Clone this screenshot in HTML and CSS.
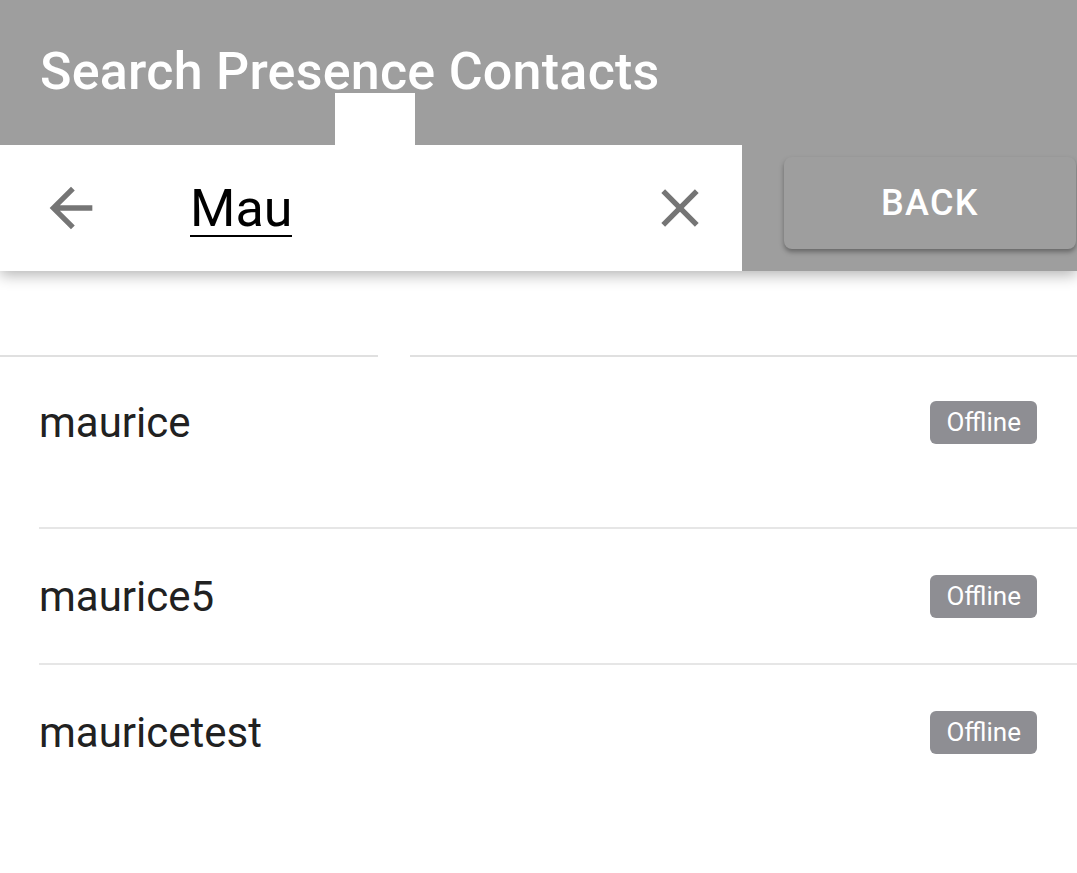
FILE: index.html
```html
<!DOCTYPE html>
<html>
<head>
<meta charset="utf-8">
<link rel="stylesheet" href="styles.css">
</head>
<body>
<header class="header">
  <div class="title-row">
    <h1 class="title">Search Presence Contacts</h1>
    <div class="notch"></div>
  </div>
  <div class="search-row">
    <div class="searchbar">
      <svg class="icon icon-back" viewBox="0 0 24 24"><path d="M20 11H7.83l5.59-5.59L12 4l-8 8 8 8 1.41-1.41L7.83 13H20v-2z"/></svg>
      <div class="query-wrap"><span class="query">Mau</span></div>
      <svg class="icon icon-close" viewBox="0 0 24 24"><path d="M19 6.410L17.590 5 12 10.59 6.41 5 5 6.41 10.59 12 5 17.59 6.41 19 12 13.41 17.59 19 19 17.59 13.41 12z"/></svg>
    </div>
    <button class="back-btn">BACK</button>
  </div>
</header>
<main class="content">
  <div class="sep"><div class="sep-a"></div><div class="sep-b"></div></div>
  <ul class="list">
    <li class="item item-first"><div class="row row-first"><span class="name">maurice</span><span class="badge">Offline</span></div></li>
    <li class="item"><div class="row"><span class="name">maurice5</span><span class="badge">Offline</span></div></li>
    <li class="item item-last"><div class="row"><span class="name">mauricetest</span><span class="badge">Offline</span></div></li>
  </ul>
</main>
</body>
</html>
```
FILE: styles.css
```css
html, body {
  margin: 0;
  padding: 0;
  background: #ffffff;
  font-family: Roboto, "Noto Sans", sans-serif;
  overflow: hidden;
}
.header {
  background: #9e9e9e;
  box-shadow: 0 4px 14px rgba(0, 0, 0, 0.3);
  position: relative;
  z-index: 1;
}
.title-row {
  display: flex;
  flex-direction: column;
  height: 145px;
}
.title {
  margin: 0;
  padding: 50px 0 0 40px;
  height: 43px;
  line-height: 43px;
  font-size: 52px;
  font-weight: 500;
  letter-spacing: 0.25px;
  color: #ffffff;
  white-space: nowrap;
}
.notch {
  margin-left: 335px;
  width: 80px;
  height: 52px;
  background: #ffffff;
}
.search-row {
  display: flex;
  height: 126px;
}
.searchbar {
  width: 742px;
  height: 126px;
  background: #ffffff;
  display: flex;
  align-items: center;
}
.icon {
  width: 64px;
  height: 64px;
  fill: #757575;
  flex: none;
}
.icon-back {
  margin-left: 39px;
}
.query-wrap {
  flex: 1;
  padding-left: 87px;
}
.query {
  display: inline-block;
  font-size: 52px;
  line-height: 52px;
  color: #000000;
  border-bottom: 2px solid #000000;
  margin-top: 4px;
}
.icon-close {
  margin-right: 30px;
}
.back-btn {
  margin: 12px 0 0 42px;
  width: 292px;
  height: 92px;
  border: none;
  border-radius: 8px;
  background: #9e9e9e;
  box-shadow: 0 3px 5px rgba(0, 0, 0, 0.35);
  color: #ffffff;
  font-family: Roboto, sans-serif;
  font-size: 36px;
  font-weight: 500;
  letter-spacing: 1.3px;
  padding: 0;
}
.content {
  padding-top: 84px;
}
.sep {
  display: flex;
  height: 2px;
}
.sep-a {
  width: 378px;
  background: #e0e0e0;
}
.sep-b {
  flex: 1;
  margin-left: 32px;
  background: #e0e0e0;
}
.list {
  list-style: none;
  margin: 0 0 0 39px;
  padding: 0;
}
.item {
  border-bottom: 2px solid #e6e6e6;
  padding-right: 40px;
}
.item-first {
  padding-bottom: 40px;
}
.item-last {
  border-bottom: none;
}
.row {
  height: 134px;
  display: flex;
  align-items: center;
  justify-content: space-between;
}
.row-first {
  height: 130px;
}
.name {
  font-size: 42px;
  color: #212121;
}
.badge {
  height: 43px;
  line-height: 43px;
  padding: 0 16px;
  border-radius: 6px;
  background: #8e8e93;
  color: #ffffff;
  font-size: 26px;
}
```
